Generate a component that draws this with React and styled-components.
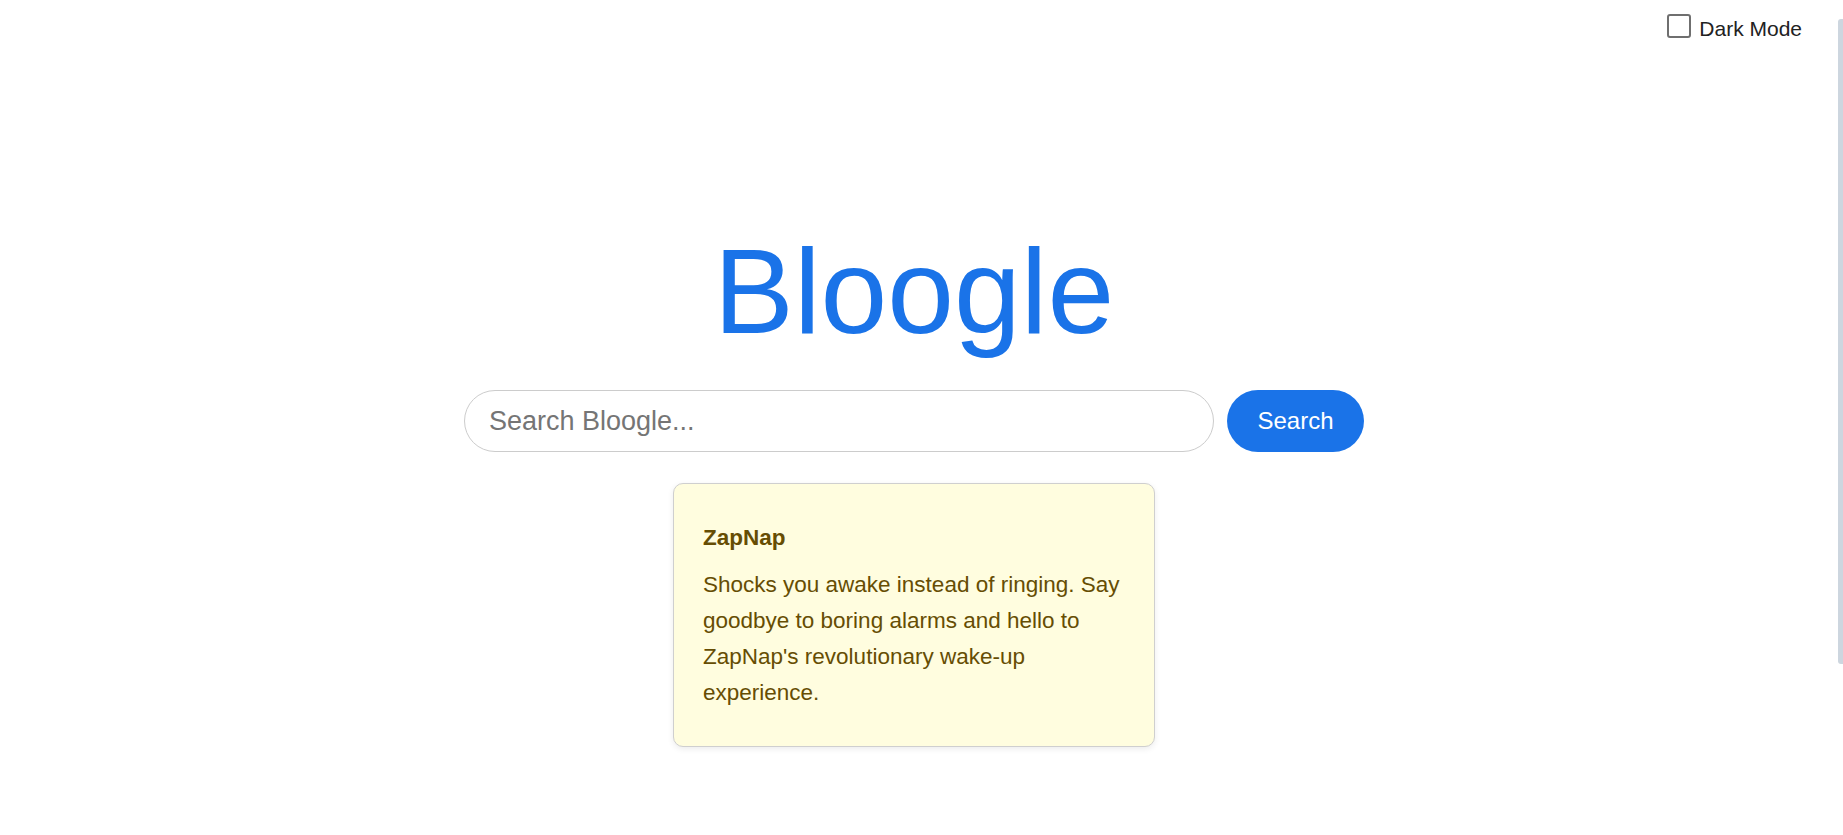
import React, { useState } from 'react';
import styled, { createGlobalStyle } from 'styled-components';

const GlobalStyle = createGlobalStyle`
    html, body {
        margin: 0;
        padding: 0;
        background: #ffffff;
        font-family: 'Liberation Sans', Arial, sans-serif;
    }
`;

const Page = styled.div`
    min-height: 1040px;
    display: flex;
    flex-direction: column;
    padding-right: 15px;
    color: ${p => (p.dark ? '#e8eaed' : '#222')};
    background: ${p => (p.dark ? '#202124' : '#ffffff')};
`;

// thin window scrollbar thumb, drawn over the right gutter
const ScrollThumb = styled.div`
    position: fixed;
    top: 19px;
    right: 0;
    width: 5px;
    height: 645px;
    border-radius: 3px 0 0 3px;
    background: #cdd6df;
`;

const TopBar = styled.header`
    display: flex;
    justify-content: flex-end;
    padding: 14px 26px 0 0;
`;

const Toggle = styled.label`
    display: flex;
    align-items: flex-start;
    gap: 8px;
    cursor: pointer;
    user-select: none;
`;

const Check = styled.input`
    appearance: none;
    width: 24px;
    height: 24px;
    margin: 0;
    border: 2px solid #6f6f6f;
    border-radius: 3px;
    background: #ffffff;
    box-sizing: border-box;
    cursor: pointer;
    &:checked {
        background: #1a73e8;
        border-color: #1a73e8;
    }
`;

const ToggleText = styled.span`
    padding-top: 3px;
    font-size: 21px;
    line-height: 24px;
    color: #222222;
`;

const Main = styled.main`
    display: flex;
    flex-direction: column;
    align-items: center;
    padding-top: 180px;
`;

const Logo = styled.h1`
    margin: 0 0 29px;
    font-size: 120px;
    line-height: 140px;
    font-weight: 400;
    color: #1a73e8;
`;

const SearchRow = styled.form`
    display: flex;
    gap: 13px;
    height: 62px;
    margin: 0;
`;

const SearchInput = styled.input`
    width: 750px;
    height: 62px;
    box-sizing: border-box;
    padding: 0 24px;
    border: 1px solid #cccccc;
    border-radius: 31px;
    font-family: 'Liberation Sans', Arial, sans-serif;
    font-size: 27px;
    color: #222222;
    outline: none;
    &::placeholder {
        color: #757575;
    }
`;

const SearchButton = styled.button`
    height: 62px;
    padding: 0 30.5px;
    border: none;
    border-radius: 31px;
    background-color: #1a73e8;
    color: #ffffff;
    font-family: 'Liberation Sans', Arial, sans-serif;
    font-size: 24px;
    cursor: pointer;
    &:hover {
        filter: brightness(110%);
    }
`;

const Card = styled.article`
    width: 482px;
    box-sizing: border-box;
    margin-top: 31px;
    padding: 36px 29px 35px;
    background: #fffddf;
    border: 1px solid #cfcfcf;
    border-radius: 10px;
    box-shadow: 0 2px 6px rgba(0, 0, 0, 0.08);
    color: #664d03;
`;

const CardTitle = styled.h3`
    margin: 0 0 11px;
    font-size: 22.5px;
    line-height: 36px;
    font-weight: 700;
`;

const CardText = styled.p`
    margin: 0;
    font-size: 22.5px;
    line-height: 36px;
`;

const results = [
    {
        title: 'ZapNap',
        text: "Shocks you awake instead of ringing. Say goodbye to boring alarms and hello to ZapNap's revolutionary wake-up experience.",
    },
];

function App() {
    const [dark, setDark] = useState(false);
    const [query, setQuery] = useState('');

    return (
        <Page dark={dark}>
            <GlobalStyle />
            <ScrollThumb />
            <TopBar>
                <Toggle>
                    <Check type="checkbox" checked={dark} onChange={e => setDark(e.target.checked)} />
                    <ToggleText>Dark Mode</ToggleText>
                </Toggle>
            </TopBar>
            <Main>
                <Logo>Bloogle</Logo>
                <SearchRow onSubmit={e => e.preventDefault()}>
                    <SearchInput
                        type="text"
                        placeholder="Search Bloogle..."
                        value={query}
                        onChange={e => setQuery(e.target.value)}
                    />
                    <SearchButton type="submit">Search</SearchButton>
                </SearchRow>
                {results.map(r => (
                    <Card key={r.title}>
                        <CardTitle>{r.title}</CardTitle>
                        <CardText>{r.text}</CardText>
                    </Card>
                ))}
            </Main>
        </Page>
    );
}

export default App;
